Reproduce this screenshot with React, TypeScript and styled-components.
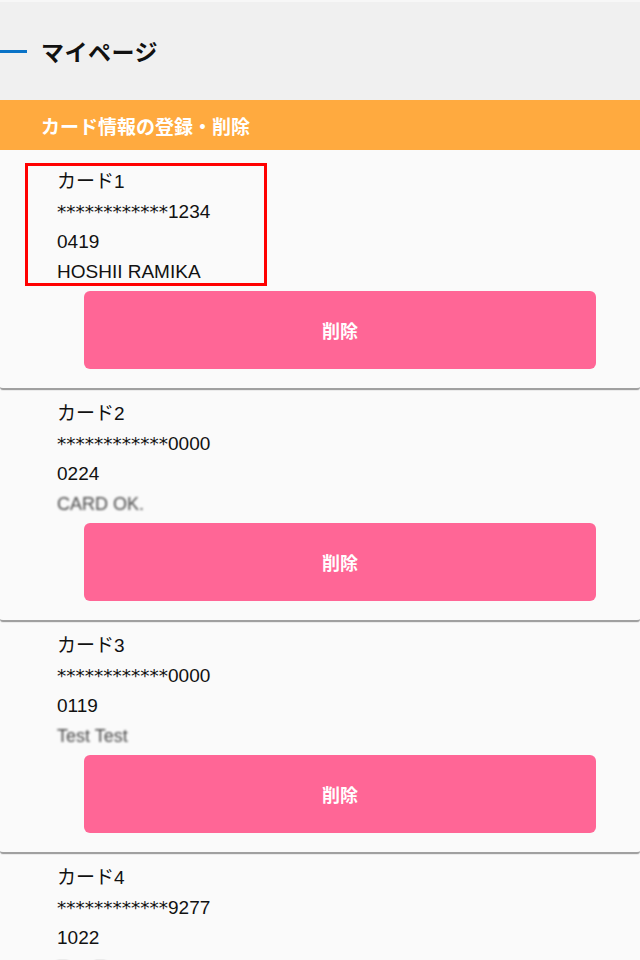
import styled, { createGlobalStyle } from 'styled-components';

const GlobalStyle = createGlobalStyle`
    html, body {
        margin: 0;
        padding: 0;
        background: #fafafa;
        font-family: "Noto Sans CJK JP", "Noto Sans", sans-serif;
        color: #111;
    }
`;

const Header = styled.header`
    height: 100px;
    background-color: #f0f0f0;
    border-top: 2px solid #f7f7f7;
    box-sizing: border-box;
    display: flex;
    align-items: center;
    gap: 14px;
`;

const Accent = styled.span`
    width: 27px;
    height: 3px;
    background-color: #0a73c7;
`;

const PageTitle = styled.h1`
    margin: 0;
    font-size: 23px;
    font-weight: 700;
    color: #111;
    letter-spacing: 0.5px;
`;

const SectionBar = styled.div`
    height: 50px;
    background-color: #ffaa3f;
    display: flex;
    align-items: center;
    padding-left: 41px;
    color: #fff;
    font-size: 19px;
    font-weight: 700;
`;

const Card = styled.section<{ $first?: boolean }>`
    background-color: #fafafa;
    padding-top: ${(p) => (p.$first ? '13px' : '7px')};
    padding-bottom: 19px;
    border-bottom: 2px solid #a0a0a0;
    border-radius: 0 0 3px 3px;
    box-shadow: 0 1px 0 #ebebeb;
    margin-bottom: 1px;
`;

const Info = styled.div<{ $marked?: boolean }>`
    box-sizing: border-box;
    margin-left: ${(p) => (p.$marked ? '25px' : '0')};
    width: ${(p) => (p.$marked ? '242px' : 'auto')};
    height: ${(p) => (p.$marked ? '123px' : 'auto')};
    border: ${(p) => (p.$marked ? '3px solid #ff0000' : 'none')};
    padding-left: ${(p) => (p.$marked ? '29px' : '57px')};
`;

const Line = styled.div`
    box-sizing: border-box;
    font-family: "Liberation Sans", "Noto Sans CJK JP", sans-serif;
    font-size: 19px;
    line-height: 28px;
    padding-top: 2px;
    height: 30px;
    white-space: nowrap;
`;

const Mask = styled.span`
    font-family: "DejaVu Sans", sans-serif;
    font-size: 18.5px;
`;

const Hidden = styled.span`
    font-size: 18px;
    color: #4a4a4a;
    filter: blur(1.2px);
`;

const DeleteButton = styled.button`
    display: block;
    margin: 5px 0 0 84px;
    width: 512px;
    height: 78px;
    border: none;
    border-radius: 6px;
    background-color: #ff6696;
    color: #fff;
    font-family: inherit;
    font-size: 18px;
    font-weight: 700;
`;

const cards = [
    { label: 'カード1', last4: '1234', exp: '0419', name: 'HOSHII RAMIKA', hidden: false },
    { label: 'カード2', last4: '0000', exp: '0224', name: 'CARD OK.', hidden: true },
    { label: 'カード3', last4: '0000', exp: '0119', name: 'Test Test', hidden: true },
    { label: 'カード4', last4: '9277', exp: '1022', name: 'Test Test', hidden: true },
];

function App() {
    return (
        <>
            <GlobalStyle />
            <Header>
                <Accent />
                <PageTitle>マイページ</PageTitle>
            </Header>
            <SectionBar>カード情報の登録・削除</SectionBar>
            {cards.map((c, i) => (
                <Card key={c.label} $first={i === 0}>
                    <Info $marked={i === 0}>
                        <Line>{c.label}</Line>
                        <Line>
                            <Mask>************</Mask>
                            {c.last4}
                        </Line>
                        <Line>{c.exp}</Line>
                        <Line>{c.hidden ? <Hidden>{c.name}</Hidden> : c.name}</Line>
                    </Info>
                    <DeleteButton>削除</DeleteButton>
                </Card>
            ))}
        </>
    );
}

export default App;
